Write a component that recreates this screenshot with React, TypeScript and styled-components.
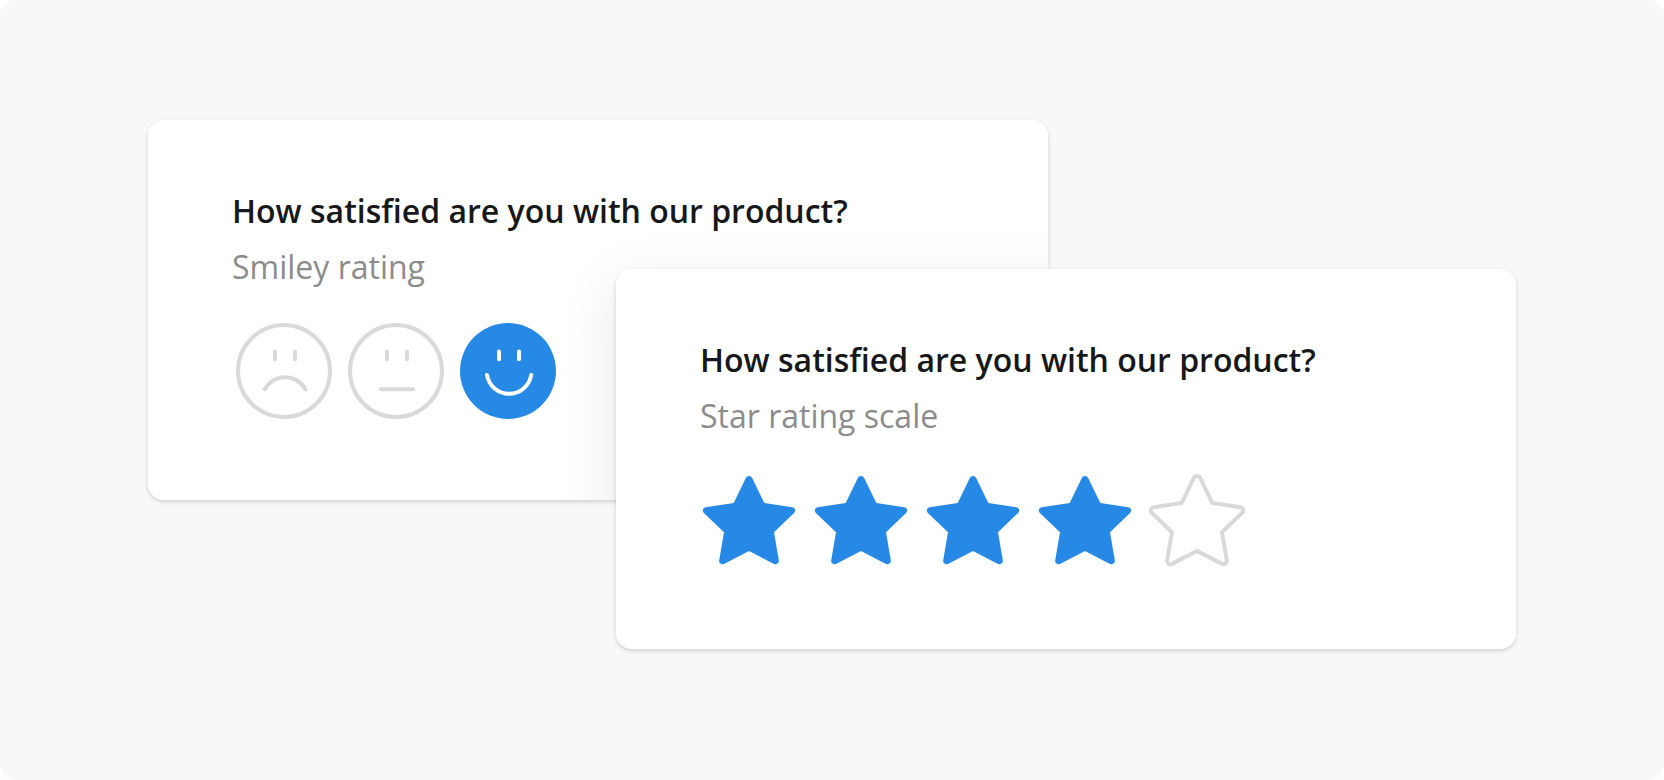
import React, { useState } from "react";
import styled, { createGlobalStyle, css } from "styled-components";

const blue = "#2689e6";
const grey = "#d9d9d9";

const GlobalStyle = createGlobalStyle`
  *, *::before, *::after { box-sizing: border-box; }
  body {
    margin: 0;
    background: #ffffff;
    font-family: "Open Sans", sans-serif;
  }
`;

const Stage = styled.main`
  display: flex;
  align-items: center;
  justify-content: center;
  min-height: 100vh;
  padding: 120px 148px 131px;
  border-radius: 16px;
  background: #f8f8f8;
`;

const Stack = styled.div`
  display: grid;
  flex: 1;
  max-width: 1368px;
  grid-template-columns: 13fr 12fr 13fr;
  grid-template-rows: 149px auto 149px;
`;

const Card = styled.fieldset<{ $front?: boolean }>`
  position: relative;
  min-width: 0;
  margin: 0;
  padding: 67px 84px 81px;
  border: 0;
  border-radius: 16px;
  background: #ffffff;
  box-shadow: 0 2px 4px rgba(0, 0, 0, 0.16);
  grid-area: ${(p) => (p.$front ? "2 / 2 / 4 / 4" : "1 / 1 / 3 / 3")};

  /* The front card casts its deep shadow on the back card only. */
  ${(p) =>
    !p.$front &&
    css`
      overflow: hidden;
      &::after {
        content: "";
        position: absolute;
        left: 52%;
        top: 149px;
        width: 100%;
        height: 100%;
        border-radius: 16px;
        box-shadow: 0 16px 60px rgba(0, 0, 0, 0.1);
        pointer-events: none;
      }
    `}
`;

const Question = styled.legend`
  float: left;
  width: 100%;
  padding: 0;
  color: #171819;
  font-size: 32px;
  font-weight: 600;
  line-height: 48px;
`;

const Caption = styled.p`
  clear: both;
  margin: 0;
  padding-top: 8px;
  color: #8c8c8c;
  font-size: 32px;
  line-height: 48px;
`;

const Options = styled.div<{ $gap: number; $inset?: number }>`
  display: flex;
  gap: ${(p) => p.$gap}px;
  margin-top: 32px;
  padding-left: ${(p) => p.$inset ?? 0}px;
`;

const Option = styled.label`
  position: relative;
  display: flex;
  cursor: pointer;
`;

const Radio = styled.input`
  position: absolute;
  inset: 0;
  width: 100%;
  height: 100%;
  margin: 0;
  opacity: 0;
  cursor: pointer;
`;

const Icon = styled.svg<{ $active: boolean }>`
  display: block;
  flex: none;
  fill: ${(p) => (p.$active ? blue : "none")};
  stroke: ${(p) => (p.$active ? "none" : grey)};
  stroke-width: 4;
`;

const Features = styled.g<{ $active: boolean }>`
  fill: none;
  stroke: ${(p) => (p.$active ? "#ffffff" : grey)};
  stroke-linecap: round;
`;

const faces = [
  { name: "Unhappy", mouth: "M28.7 66.4A23.1 23.1 0 0 1 69.5 66.4" },
  { name: "Neutral", mouth: "M33 66.3H65" },
  { name: "Happy", mouth: "M27 52A22.4 22.4 0 0 0 71.2 52" },
];

const starPath =
  "M33.7 31L45.8 6A3.6 3.6 0 0 1 52.2 6L64.3 31L92.4 35.2A3.3 3.3 0 0 1 94.1 40.9L74 60.3L78.8 88.2A3.4 3.4 0 0 1 74 91.9L49 79L24 91.9A3.4 3.4 0 0 1 19.2 88.2L24 60.3L3.9 40.9A3.3 3.3 0 0 1 5.6 35.2Z";

function SmileyRating() {
  const [value, setValue] = useState(2);
  return (
    <Card>
      <Question>How satisfied are you with our product?</Question>
      <Caption>Smiley rating</Caption>
      <Options $gap={16} $inset={4}>
        {faces.map((face, i) => {
          const active = value === i;
          return (
            <Option key={face.name}>
              <Radio
                type="radio"
                name="smiley"
                aria-label={face.name}
                checked={active}
                onChange={() => setValue(i)}
              />
              <Icon $active={active} width="96" height="96" viewBox="0 0 96 96" aria-hidden="true">
                <circle cx="48" cy="48" r={active ? 48 : 46} />
                <Features $active={active}>
                  <path d="M39 28.5V36.3M59 28.5V36.3" />
                  <path d={face.mouth} />
                </Features>
              </Icon>
            </Option>
          );
        })}
      </Options>
    </Card>
  );
}

function StarRating() {
  const [value, setValue] = useState(4);
  return (
    <Card $front>
      <Question>How satisfied are you with our product?</Question>
      <Caption>Star rating scale</Caption>
      <Options $gap={14}>
        {[1, 2, 3, 4, 5].map((n) => (
          <Option key={n}>
            <Radio
              type="radio"
              name="stars"
              aria-label={`${n} of 5`}
              checked={value === n}
              onChange={() => setValue(n)}
            />
            <Icon $active={n <= value} width="98" height="96" viewBox="0 0 98 96" aria-hidden="true">
              <path d={starPath} />
            </Icon>
          </Option>
        ))}
      </Options>
    </Card>
  );
}

export default function App() {
  return (
    <>
      <GlobalStyle />
      <Stage>
        <Stack>
          <SmileyRating />
          <StarRating />
        </Stack>
      </Stage>
    </>
  );
}
